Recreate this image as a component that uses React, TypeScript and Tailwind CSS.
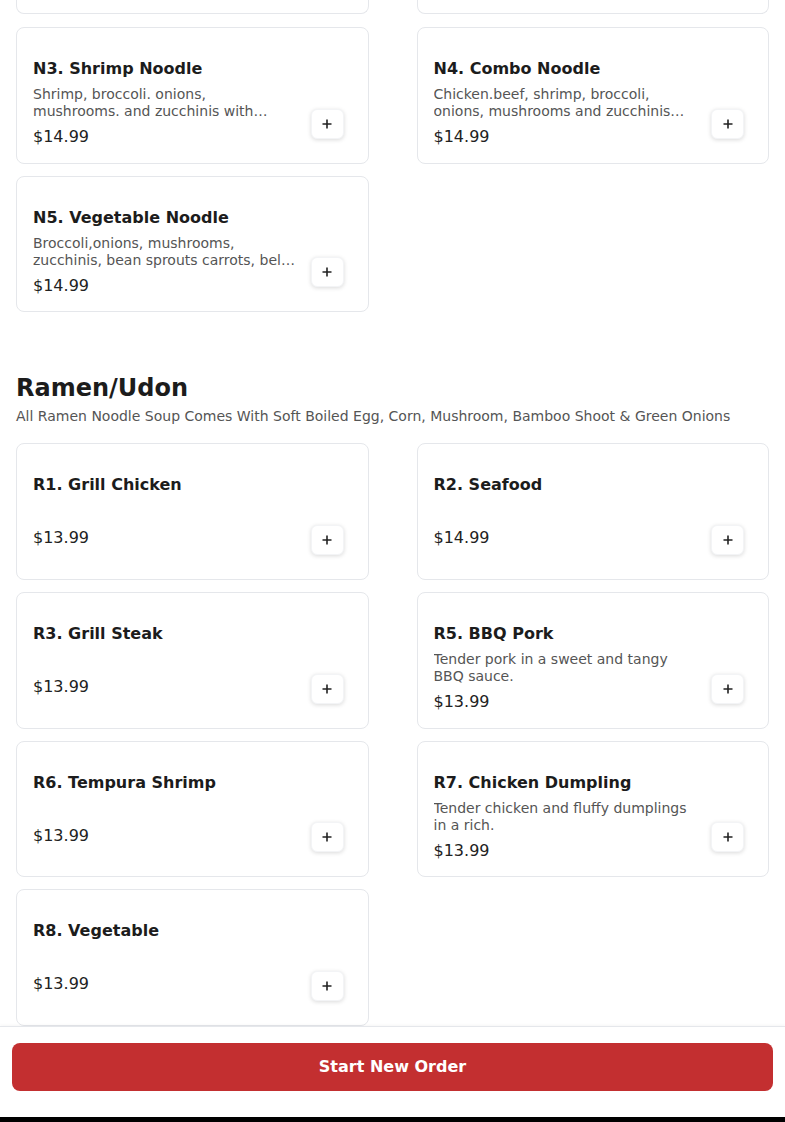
import React from 'react';

interface MenuItem {
  name: string;
  price: string;
  description?: string;
}

const noodles: MenuItem[] = [
  { name: 'N3. Shrimp Noodle', price: '$14.99', description: 'Shrimp, broccoli. onions, mushrooms. and zucchinis with noodles in house sauce.' },
  { name: 'N4. Combo Noodle', price: '$14.99', description: 'Chicken.beef, shrimp, broccoli, onions, mushrooms and zucchinis with noodles.' },
  { name: 'N5. Vegetable Noodle', price: '$14.99', description: 'Broccoli,onions, mushrooms, zucchinis, bean sprouts carrots, bell peppers with noodles.' },
];

const ramen: MenuItem[] = [
  { name: 'R1. Grill Chicken', price: '$13.99' },
  { name: 'R2. Seafood', price: '$14.99' },
  { name: 'R3. Grill Steak', price: '$13.99' },
  { name: 'R5. BBQ Pork', price: '$13.99', description: 'Tender pork in a sweet and tangy BBQ sauce.' },
  { name: 'R6. Tempura Shrimp', price: '$13.99' },
  { name: 'R7. Chicken Dumpling', price: '$13.99', description: 'Tender chicken and fluffy dumplings in a rich.' },
  { name: 'R8. Vegetable', price: '$13.99' },
];

function PlusIcon() {
  return (
    <svg width="12" height="12" viewBox="0 0 12 12" fill="none">
      <path d="M6 1.5v9M1.5 6h9" stroke="#222" strokeWidth="1.6" />
    </svg>
  );
}

function ItemCard({ name, price, description }: MenuItem) {
  return (
    <div className="flex h-[136.7px] items-start rounded-lg border border-gray-200 bg-white pl-4 pr-6 pt-[29px]">
      <div className="min-w-0 flex-1 pr-[15px]">
        <h3 className="text-base font-bold leading-6 text-[#1c1c1c]">{name}</h3>
        {description ? (
          <p className="mt-[5px] line-clamp-2 text-sm leading-[17px] text-[#555]">{description}</p>
        ) : (
          <div className="h-[24px]" />
        )}
        <p className="mt-[5px] text-base leading-6 text-[#222]">{price}</p>
      </div>
      <button className="mb-[24px] flex h-[30px] w-[33px] shrink-0 items-center justify-center self-end rounded-md border border-gray-100 bg-white shadow-[0_1px_4px_rgba(0,0,0,0.15)]">
        <PlusIcon />
      </button>
    </div>
  );
}

export default function App() {
  return (
    <div
      className="flex h-[1122px] flex-col overflow-hidden bg-white"
      style={{ fontFamily: '"DejaVu Sans", sans-serif' }}
    >
      <main className="min-h-0 flex-1 overflow-hidden px-4">
        {/* bottoms of the cards scrolled above the view */}
        <div className="grid grid-cols-2 gap-x-12">
          <div className="h-[14px] rounded-b-lg border border-t-0 border-gray-200" />
          <div className="h-[14px] rounded-b-lg border border-t-0 border-gray-200" />
        </div>
        <div className="mt-[13px] grid grid-cols-2 gap-x-12 gap-y-3">
          {noodles.map((item) => (
            <ItemCard key={item.name} {...item} />
          ))}
        </div>

        <section className="mt-[60px]">
          <h2 className="text-2xl font-bold leading-8 text-[#1c1c1c]">Ramen/Udon</h2>
          <p className="mt-[2px] text-sm leading-5 text-[#555]">
            All Ramen Noodle Soup Comes With Soft Boiled Egg, Corn, Mushroom, Bamboo Shoot &amp; Green Onions
          </p>
          <div className="mt-[17px] grid grid-cols-2 gap-x-12 gap-y-3">
            {ramen.map((item) => (
              <ItemCard key={item.name} {...item} />
            ))}
          </div>
        </section>
      </main>

      <footer className="border-t border-gray-200 bg-white px-3 pt-4 pb-[26px] shadow-[0_-1px_3px_rgba(0,0,0,0.04)]">
        <button className="flex h-12 w-full items-center justify-center rounded-lg bg-[#c32f30] text-base font-bold text-white">
          Start New Order
        </button>
      </footer>
      <div className="h-[5px] bg-black" />
    </div>
  );
}
